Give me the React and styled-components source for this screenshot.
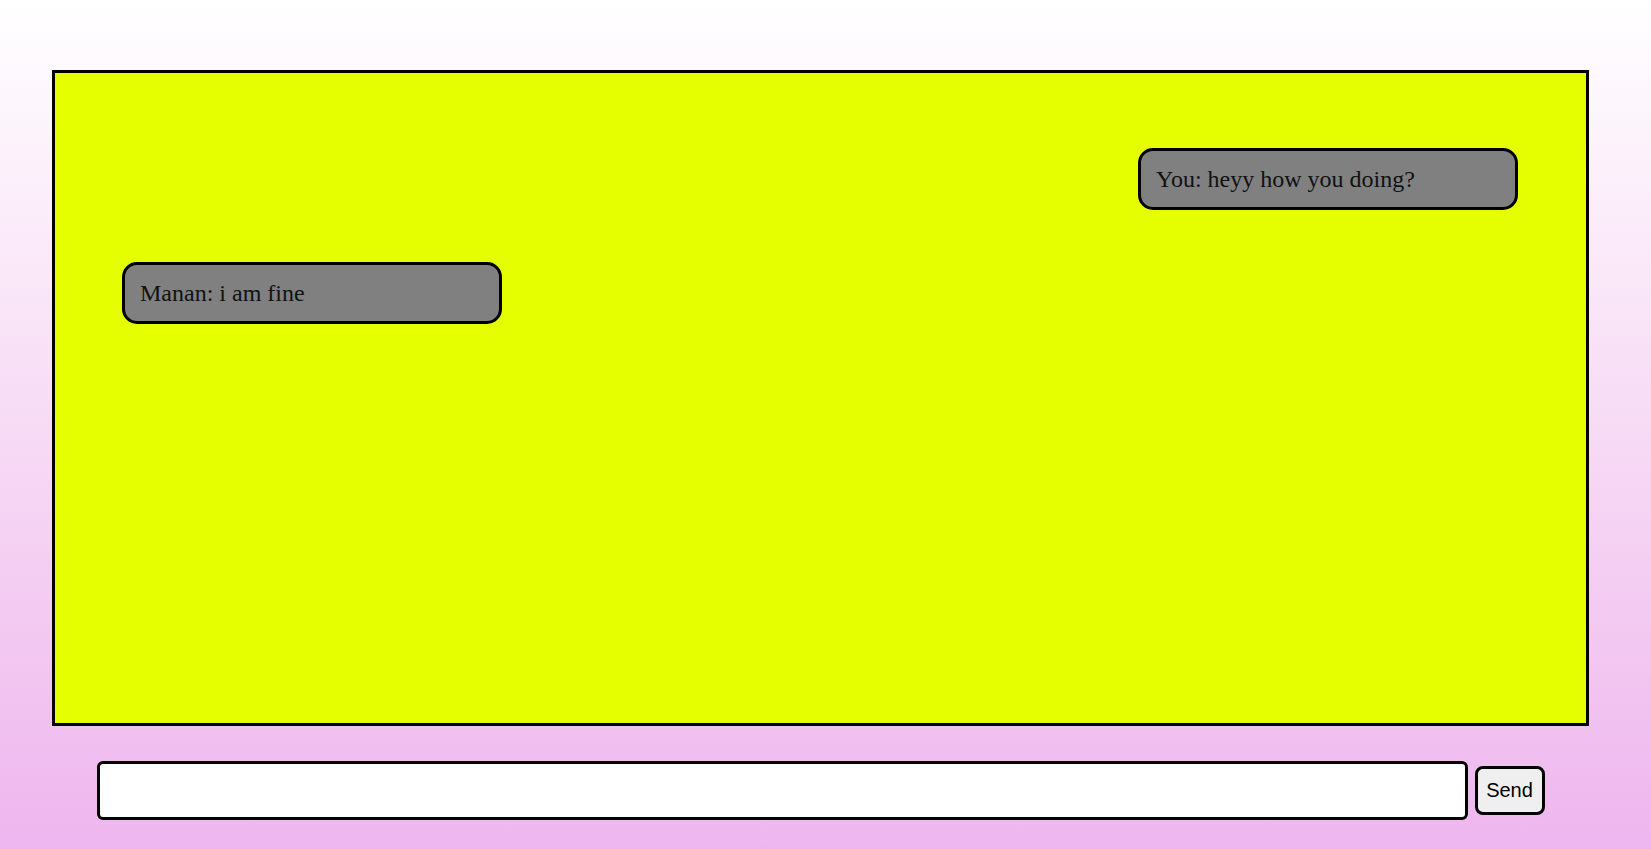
import React, { useState } from "react"
import styled, { createGlobalStyle } from "styled-components"

const GlobalStyle = createGlobalStyle`
  html, body {
    margin: 0;
    padding: 0;
  }
  body {
    font-family: "Liberation Serif", "Times New Roman", serif;
    overflow: hidden;
  }
`

const Page = styled.div`
  height: 100vh;
  box-sizing: border-box;
  padding: 70px 0 0 52px;
  background: linear-gradient(to bottom, #ffffff 0%, #f7dbf5 50%, #eeb6ee 100%);
`

const ChatBox = styled.div`
  width: 1537px;
  height: 656px;
  box-sizing: border-box;
  border: 3px solid #000;
  background: #e6ff00;
  padding: 75px 68px 75px 67px;
  display: flex;
  flex-direction: column;
  gap: 52px;
`

const Bubble = styled.div`
  align-self: ${(p) => (p.$mine ? "flex-end" : "flex-start")};
  width: 380px;
  height: 62px;
  box-sizing: border-box;
  display: flex;
  align-items: center;
  padding: 0 15px;
  background: #808080;
  border: 3px solid #000;
  border-radius: 15px;
  font-size: 24px;
  color: #111;
`

const InputRow = styled.form`
  width: 1537px;
  margin-top: 35px;
  display: flex;
  justify-content: center;
  align-items: center;
  gap: 7px;
`

const TextInput = styled.input`
  width: 1371px;
  height: 59px;
  box-sizing: border-box;
  border: 3px solid #000;
  border-radius: 6px;
  background: #fff;
  padding: 0 4px;
  font-size: 20px;
  font-family: "Liberation Sans", Arial, sans-serif;
  outline: none;
`

const SendButton = styled.button`
  width: 70px;
  height: 49px;
  box-sizing: border-box;
  border: 3px solid #000;
  border-radius: 8px;
  background: #efefef;
  font-family: "Liberation Sans", Arial, sans-serif;
  font-size: 20px;
  color: #000;
  padding: 0;
  cursor: pointer;
`

export default function App() {
  const [messages, setMessages] = useState([
    { from: "You", text: "heyy how you doing?", mine: true },
    { from: "Manan", text: "i am fine", mine: false },
  ])
  const [draft, setDraft] = useState("")

  const send = (e) => {
    e.preventDefault()
    if (!draft.trim()) return
    setMessages([...messages, { from: "You", text: draft, mine: true }])
    setDraft("")
  }

  return (
    <Page>
      <GlobalStyle />
      <ChatBox>
        {messages.map((m, i) => (
          <Bubble key={i} $mine={m.mine}>
            {m.from}: {m.text}
          </Bubble>
        ))}
      </ChatBox>
      <InputRow onSubmit={send}>
        <TextInput
          autoFocus
          value={draft}
          onChange={(e) => setDraft(e.target.value)}
        />
        <SendButton type="submit">Send</SendButton>
      </InputRow>
    </Page>
  )
}
